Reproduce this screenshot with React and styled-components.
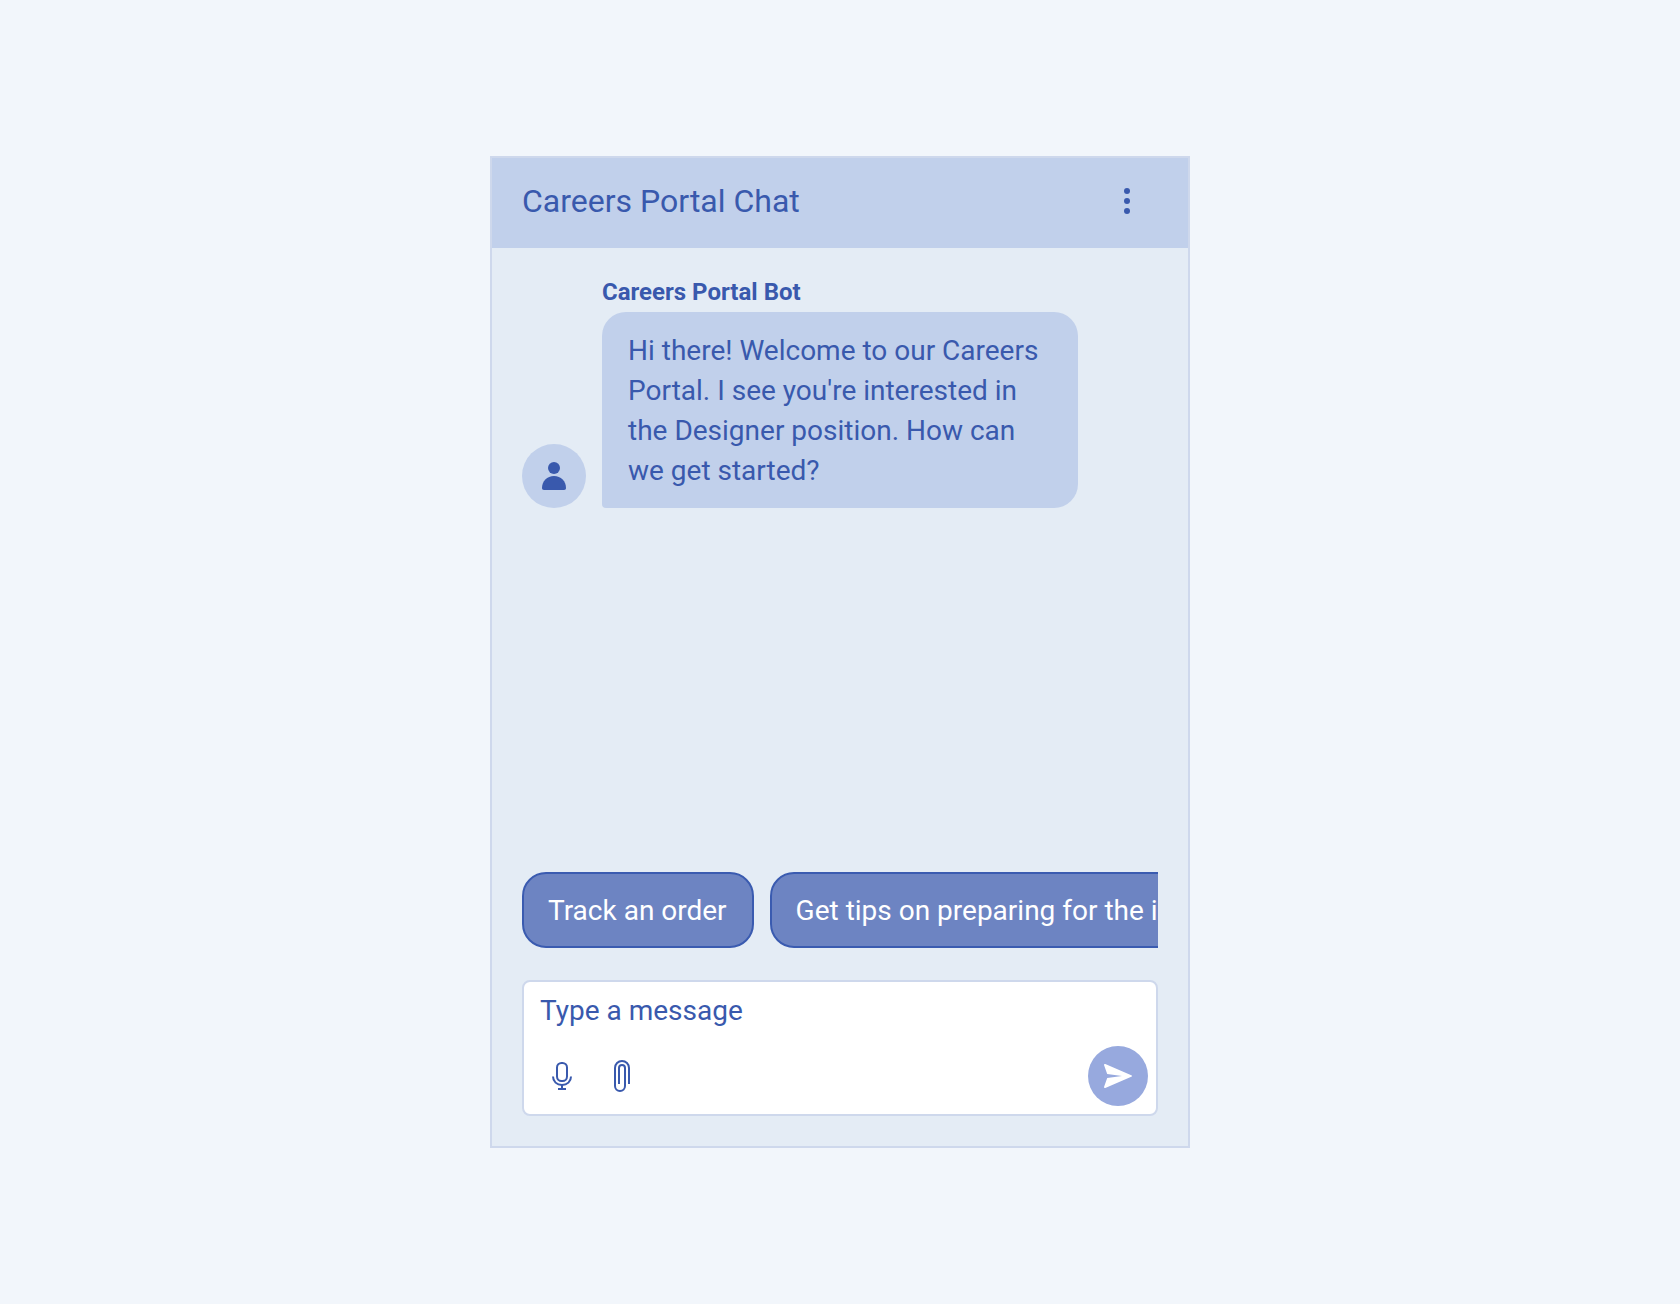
import React, { useState } from "react";
import styled, { createGlobalStyle } from "styled-components";

const suggestions = [
  "Track an order",
  "Get tips on preparing for the interview",
];

const App = () => {
  const [message, setMessage] = useState("");

  const handleSubmit = (e) => {
    e.preventDefault();
    setMessage("");
  };

  return (
    <Page>
      <GlobalStyle />
      <Chat>
        <Header>
          <Title>Careers Portal Chat</Title>
          <IconButton type="button" aria-label="Chat options">
            <svg width="32" height="32" viewBox="0 0 32 32" fill="currentColor">
              <circle cx="15" cy="6" r="3" />
              <circle cx="15" cy="16" r="3" />
              <circle cx="15" cy="26" r="3" />
            </svg>
          </IconButton>
        </Header>

        <Thread>
          <Message>
            <Avatar>
              <svg width="28" height="32" viewBox="0 0 28 32" fill="currentColor">
                <circle cx="14" cy="8" r="6" />
                <path d="M2 28C2 21 7 16 14 16s12 5 12 12c0 1.300-.7 2-2 2H4c-1.300 0-2-.7-2-2Z" />
              </svg>
            </Avatar>
            <MessageBody>
              <Sender>Careers Portal Bot</Sender>
              <Bubble>
                Hi there! Welcome to our Careers Portal. I see you're interested
                in the Designer position. How can we get started?
              </Bubble>
            </MessageBody>
          </Message>
        </Thread>

        <Footer>
          <Suggestions>
            {suggestions.map((text) => (
              <Chip type="button" key={text}>
                {text}
              </Chip>
            ))}
          </Suggestions>

          <Composer onSubmit={handleSubmit}>
            <MessageInput
              type="text"
              aria-label="Message"
              placeholder="Type a message"
              value={message}
              onChange={(e) => setMessage(e.target.value)}
            />
            <Tools>
              <IconButton type="button" aria-label="Record a voice message">
                <svg
                  width="20"
                  height="28"
                  viewBox="0 0 20 28"
                  fill="none"
                  stroke="currentColor"
                  strokeWidth="2"
                >
                  <rect x="5" y="1" width="10" height="18" rx="4.500" />
                  <path d="M1 14.500c0 5 3.800 8.500 9 8.500s9-3.500 9-8.500" />
                  <path d="M10 23V27M6 27h8" />
                </svg>
              </IconButton>
              <IconButton type="button" aria-label="Attach a file">
                <svg
                  width="16"
                  height="32"
                  viewBox="0 0 16 32"
                  fill="none"
                  stroke="currentColor"
                  strokeWidth="2"
                >
                  <path d="M15 24V8a7 7 0 0 0-14 0v18a5 5 0 0 0 10 0V8a3 3 0 0 0-6 0v16" />
                </svg>
              </IconButton>
              <SendButton type="submit" aria-label="Send">
                <svg width="28" height="24" viewBox="0 0 28 24" fill="currentColor">
                  <path d="M1.300.1 27.300 11.200c.9.4.9 1.200 0 1.600L1.300 23.900c-.9.300-1.500-.2-1.200-1.100L3.200 14 18 12 3.200 10 .1 1.200C-.2.300.4-.2 1.300.1Z" />
                </svg>
              </SendButton>
            </Tools>
          </Composer>
        </Footer>
      </Chat>
    </Page>
  );
};

const GlobalStyle = createGlobalStyle`
  * {
    box-sizing: border-box;
  }
  body {
    margin: 0;
    background-color: #f2f6fb;
    font-family: Roboto, sans-serif;
    color: #3959ad;
  }
  button,
  input {
    font-family: inherit;
    color: inherit;
  }
  svg {
    display: block;
  }
`;

const Page = styled.main`
  display: flex;
  justify-content: center;
  min-height: 100vh;
  padding: 156px 24px;
`;

const Chat = styled.section`
  display: flex;
  flex-direction: column;
  width: 100%;
  max-width: 700px;
  border: 2px solid #ced8ec;
  background-color: #e4ecf5;
`;

const Header = styled.header`
  display: flex;
  justify-content: space-between;
  align-items: center;
  padding: 13px 30px 17px;
  background-color: #c1d0eb;
`;

const Title = styled.h1`
  margin: 0;
  font-size: 32px;
  font-weight: 400;
  line-height: 40px;
`;

const IconButton = styled.button`
  display: flex;
  justify-content: center;
  align-items: center;
  width: 60px;
  height: 60px;
  padding: 0;
  border: none;
  background: none;
  cursor: pointer;
`;

const Thread = styled.div`
  flex: 1;
  padding: 24px 30px;
`;

const Message = styled.div`
  display: flex;
  align-items: flex-end;
  gap: 16px;
`;

const Avatar = styled.div`
  display: flex;
  justify-content: center;
  align-items: center;
  flex-shrink: 0;
  width: 64px;
  height: 64px;
  border-radius: 50%;
  background-color: #c1d0eb;
`;

const MessageBody = styled.div`
  max-width: 476px;
`;

const Sender = styled.h2`
  margin: 0;
  font-size: 24px;
  font-weight: 700;
  line-height: 40px;
`;

const Bubble = styled.p`
  margin: 0;
  padding: 19px 26px 17px;
  border-radius: 24px 24px 24px 4px;
  background-color: #c1d0eb;
  font-size: 28px;
  line-height: 40px;
`;

const Footer = styled.footer`
  display: flex;
  flex-direction: column;
  gap: 32px;
  padding: 0 30px 30px;
`;

const Suggestions = styled.div`
  display: flex;
  gap: 16px;
  overflow: hidden;
`;

const Chip = styled.button`
  flex-shrink: 0;
  padding: 17px 25px 15px 24px;
  border: 2px solid #3a5bb0;
  border-radius: 24px;
  background-color: #6d84c2;
  color: #ffffff;
  font-size: 28px;
  line-height: 40px;
  white-space: nowrap;
  cursor: pointer;
`;

const Composer = styled.form`
  border: 2px solid #ced8ec;
  border-radius: 8px;
  background-color: #ffffff;
`;

const MessageInput = styled.input`
  display: block;
  width: 100%;
  height: 56px;
  padding: 0 16px;
  border: none;
  outline: none;
  background: none;
  font-size: 28px;

  &::placeholder {
    color: #3959ad;
    opacity: 1;
  }
`;

const Tools = styled.div`
  display: flex;
  padding: 8px;
`;

const SendButton = styled(IconButton)`
  margin-left: auto;
  border-radius: 50%;
  background-color: #97a9de;
  color: #ffffff;
`;

export default App;
